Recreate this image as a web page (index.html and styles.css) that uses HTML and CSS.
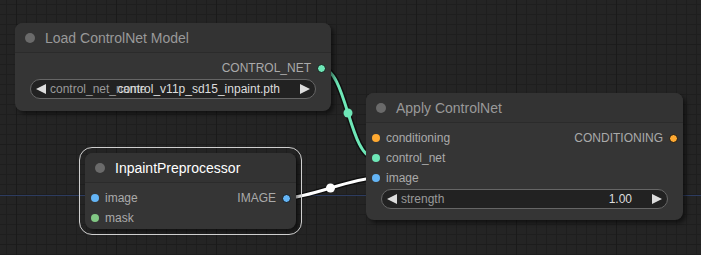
FILE: index.html
```html
<!DOCTYPE html>
<html>
<head>
<meta charset="utf-8">
<link rel="stylesheet" href="styles.css">
</head>
<body>
<div class="canvas">
  <svg class="links" width="701" height="255" viewBox="0 0 701 255">
    <line x1="0" y1="195.5" x2="701" y2="195.5" class="axis"/>
    <path class="link-border" d="M321 68 C347 68, 349 158, 375 158"/>
    <path class="link link-cn" d="M321 68 C347 68, 349 158, 375 158"/>
    <circle cx="348" cy="113" r="4.5" class="mid-cn"/>
    <path class="link-border" d="M286 198 C309 198, 352 178, 375 178"/>
    <path class="link link-sel" d="M286 198 C309 198, 352 178, 375 178"/>
    <circle cx="330.5" cy="188" r="4.5" class="mid-sel"/>
  </svg>

  <div class="node node-load">
    <div class="title"><span class="tdot"></span><span class="ttext">Load ControlNet Model</span></div>
    <div class="body">
      <div class="row">
        <span></span>
        <span class="slot out"><span class="lbl">CONTROL_NET</span><span class="dot odot c-cn"></span></span>
      </div>
      <div class="widget">
        <svg class="arr" width="10" height="10" viewBox="0 0 10 10"><polygon points="10,0 0,5 10,10"/></svg>
        <span class="wlabel">control_net_name</span>
        <span class="wvalue">control_v11p_sd15_inpaint.pth</span>
        <svg class="arr" width="10" height="10" viewBox="0 0 10 10"><polygon points="0,0 10,5 0,10"/></svg>
      </div>
    </div>
  </div>

  <div class="node node-apply">
    <div class="title"><span class="tdot"></span><span class="ttext">Apply ControlNet</span></div>
    <div class="body">
      <div class="row">
        <span class="slot in"><span class="dot c-cond"></span><span class="lbl">conditioning</span></span>
        <span class="slot out"><span class="lbl">CONDITIONING</span><span class="dot odot c-cond"></span></span>
      </div>
      <div class="row">
        <span class="slot in"><span class="dot c-cn"></span><span class="lbl">control_net</span></span>
      </div>
      <div class="row">
        <span class="slot in"><span class="dot c-img"></span><span class="lbl">image</span></span>
      </div>
      <div class="widget">
        <svg class="arr" width="10" height="10" viewBox="0 0 10 10"><polygon points="10,0 0,5 10,10"/></svg>
        <span class="wlabel">strength</span>
        <span class="wvalue">1.00</span>
        <svg class="arr" width="10" height="10" viewBox="0 0 10 10"><polygon points="0,0 10,5 0,10"/></svg>
      </div>
    </div>
  </div>

  <div class="node node-inpaint selected">
    <div class="title"><span class="tdot"></span><span class="ttext">InpaintPreprocessor</span></div>
    <div class="body">
      <div class="row">
        <span class="slot in"><span class="dot c-img"></span><span class="lbl">image</span></span>
        <span class="slot out"><span class="lbl">IMAGE</span><span class="dot odot c-img"></span></span>
      </div>
      <div class="row">
        <span class="slot in"><span class="dot c-mask"></span><span class="lbl">mask</span></span>
      </div>
    </div>
  </div>
</div>
</body>
</html>
```

FILE: styles.css
```css
* { box-sizing: border-box; }
html, body { margin: 0; padding: 0; }
body {
  width: 701px;
  height: 255px;
  overflow: hidden;
  font-family: "Liberation Sans", Arial, sans-serif;
}
.canvas {
  position: relative;
  width: 701px;
  height: 255px;
  background-color: #242424;
  background-image:
    linear-gradient(90deg, #1a1a1a 1px, transparent 1px),
    linear-gradient(180deg, #1c1c1c 1px, transparent 1px),
    linear-gradient(90deg, #1e1e1e 1px, transparent 1px),
    linear-gradient(180deg, #1e1e1e 1px, transparent 1px);
  background-size: 100px 100px, 100px 100px, 10px 10px, 10px 10px;
  background-position: 16px 0, 0 44px, 6px 0, 0 4px;
}
.links {
  position: absolute;
  left: 0;
  top: 0;
}
.axis { stroke: #2d3c60; stroke-width: 1; }
.link-border { fill: none; stroke: rgba(0,0,0,0.55); stroke-width: 6; }
.link { fill: none; stroke-width: 3; }
.link-cn { stroke: #6ee7b7; }
.link-sel { stroke: #ffffff; }
.mid-cn { fill: #6ee7b7; }
.mid-sel { fill: #ffffff; }

.node {
  position: absolute;
  background: #353535;
  border-radius: 8px;
  box-shadow: 3px 3px 4px rgba(0,0,0,0.5);
  display: flex;
  flex-direction: column;
}
.node-load { left: 15px; top: 23px; width: 316px; height: 88px; }
.node-apply { left: 366px; top: 93px; width: 317px; height: 127px; }
.node-inpaint { left: 85px; top: 153px; width: 211px; height: 76px; }
.selected::before {
  content: "";
  position: absolute;
  left: -6px; top: -6px; right: -6px; bottom: -6px;
  border: 1.5px solid #cfcfcf;
  border-radius: 13px;
  pointer-events: none;
}
.title {
  height: 30px;
  display: flex;
  align-items: center;
  gap: 10px;
  padding-left: 10px;
  background: #333333;
  border-radius: 8px 8px 0 0;
  border-bottom: 1px solid #2b2b2b;
}
.tdot {
  width: 10px;
  height: 10px;
  border-radius: 50%;
  background: #6a6a6a;
  flex: none;
}
.ttext {
  font-size: 14px;
  color: #999999;
  line-height: 30px;
  white-space: nowrap;
}
.selected .ttext { color: #ffffff; }
.body {
  padding-top: 5px;
  display: flex;
  flex-direction: column;
}
.row {
  height: 20px;
  display: flex;
  justify-content: space-between;
  align-items: center;
}
.slot {
  display: flex;
  align-items: center;
  gap: 6px;
  font-size: 12px;
  color: #aaaaaa;
  white-space: nowrap;
}
.slot.in { padding-left: 6px; }
.slot.out { padding-right: 5px; }
.dot {
  width: 8px;
  height: 8px;
  border-radius: 50%;
  flex: none;
}
.odot {
  width: 9px;
  height: 9px;
  border: 1px solid #151515;
}
.c-cn { background: #6ee7b7; }
.c-cond { background: #ffa931; }
.c-img { background: #64b5f6; }
.c-mask { background: #81c784; }

.widget {
  position: relative;
  margin: 1px 15px 0 15px;
  height: 20px;
  border: 1px solid #666666;
  border-radius: 10px;
  background: #222222;
  display: flex;
  align-items: center;
  padding: 0 5px;
  font-size: 12px;
  white-space: nowrap;
}
.arr { flex: none; }
.arr polygon { fill: #dddddd; }
.wlabel {
  color: #999999;
  margin-left: 4px;
}
.wvalue {
  position: absolute;
  right: 35px;
  top: 0;
  line-height: 18px;
  color: #dddddd;
}
.widget .arr:last-child { margin-left: auto; }
```
